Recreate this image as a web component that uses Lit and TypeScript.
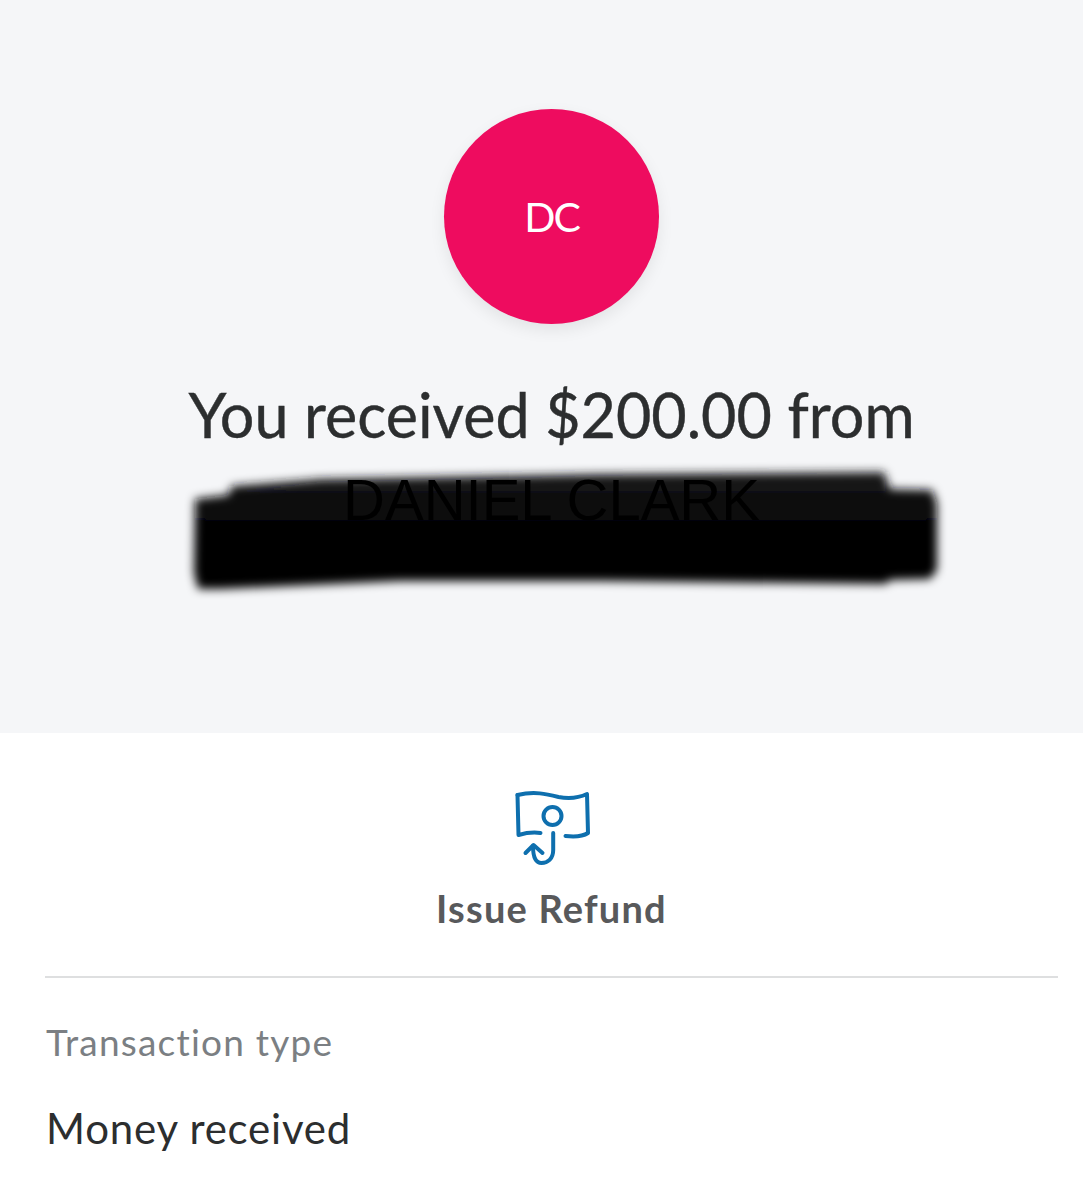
import { LitElement, html, css } from "lit";
import { customElement } from "lit/decorators.js";

@customElement("app-root")
export class AppRoot extends LitElement {
  static styles = css`
    :host { display: block; width: 1083px; height: 1200px; overflow: hidden; background: #fff; font-family: "Lato", "Noto Sans", sans-serif; }
    .top { height: 733px; background: #f5f6f8; display: flex; flex-direction: column; align-items: center; padding: 109px 0 0 20px; box-sizing: border-box; }
    .avatar { width: 215px; height: 215px; border-radius: 50%; background: #ee0c5f; color: #fff; display: flex; align-items: center; justify-content: center; font-size: 41px; font-weight: 400; letter-spacing: -2px; box-shadow: 0 6px 16px rgba(0,0,0,.08); }
    h1 { margin: 56px 0 0; font-weight: 400; font-size: 61px; line-height: 70px; color: #2c2e2f; white-space: nowrap; -webkit-text-stroke: .4px #2c2e2f; }
    .name { position: relative; align-self: stretch; margin-top: 20px; text-align: center; font-family: "Liberation Sans", sans-serif; font-size: 58px; line-height: 60px; color: #000; }
    .name span { position: relative; }
    .scribble { position: absolute; left: -20px; top: -27px; width: 1083px; height: 160px; }
    .action { display: flex; flex-direction: column; align-items: center; padding: 37px 0 0 20px; }
    .action svg { display: block; width: 120px; height: 110px; }
    .label { margin-top: 6px; font-size: 38px; line-height: 44px; font-weight: 700; color: #58595b; letter-spacing: 1.2px; }
    hr { margin: 46px 25px 0 45px; border: 0; border-top: 2px solid #dedfe0; }
    .detail { padding: 42px 46px 0; }
    .k { font-size: 37px; line-height: 44px; color: #7b7f83; letter-spacing: 1.2px; }
    .v { margin-top: 39px; font-size: 42px; line-height: 50px; color: #2c2e2f; letter-spacing: .8px; }
  `;

  render() {
    return html`
      <section class="top">
        <div class="avatar">DC</div>
        <h1>You received $200.00 from</h1>
        <div class="name">
          <svg class="scribble" viewBox="0 440 1083 160" aria-hidden="true">
            <defs>
              <filter id="b" x="-5%" y="-20%" width="110%" height="140%"><feGaussianBlur stdDeviation="5"/></filter>
              <linearGradient id="g" x1="0" y1="470" x2="0" y2="535" gradientUnits="userSpaceOnUse">
                <stop offset="0" stop-color="#1c1c1e"/>
                <stop offset=".4" stop-color="#0c0c0d"/>
                <stop offset=".8" stop-color="#050505"/>
                <stop offset="1" stop-color="#000"/>
              </linearGradient>
            </defs>
            <g filter="url(#b)" fill="url(#g)">
              <path d="M195 496 L228 492 L232 483 L310 477 L320 476 L600 471 L884 469 L890 486 L932 487 L937 500 L937 567 L930 576 L890 577 L886 581 L600 578 L400 578 L220 586 L198 586 L194 570 Z"/>
            </g>
          </svg>
          <span>DANIEL CLARK</span>
        </div>
      </section>
      <section class="action">
        <svg viewBox="1.5 0 120 110" fill="none" stroke="#0e6fae" stroke-width="4" stroke-linecap="round" stroke-linejoin="round" aria-hidden="true">
          <path d="M27 25 C44 21 56 24 68 27 C79 29 88 28 96.5 24 L97.5 63 C93 66 84 67 75 66"/>
          <path d="M27 25 L28 65 C35 63 43 62 50 63"/>
          <circle cx="62" cy="46" r="9"/>
          <path d="M62.7 63 L62.7 80 C62.7 89 57 93 51 93 C45 93 42.5 87 42.5 76"/>
          <path d="M35 83 L43 75 L52 83"/>
        </svg>
        <div class="label">Issue Refund</div>
      </section>
      <hr />
      <section class="detail">
        <div class="k">Transaction type</div>
        <div class="v">Money received</div>
      </section>
    `;
  }
}
